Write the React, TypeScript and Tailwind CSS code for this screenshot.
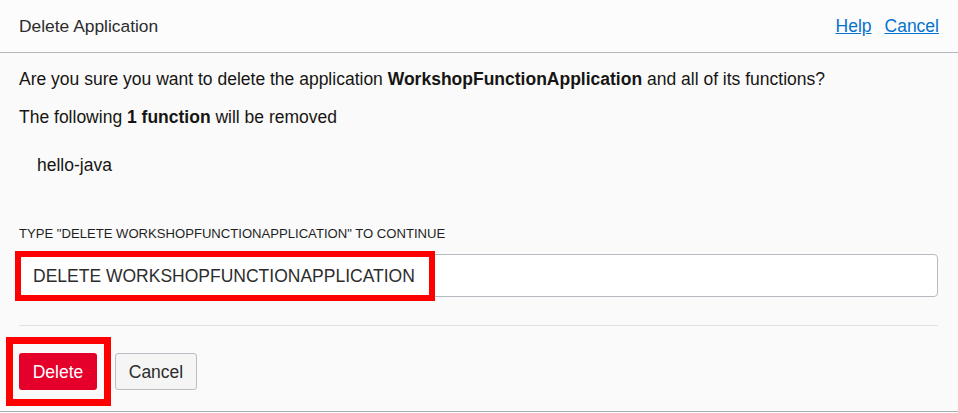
export default function App() {
  return (
    <div
      className="w-[958px] h-[413px] bg-[#fafafa] text-[#161513] overflow-hidden"
      style={{ fontFamily: '"Liberation Sans", Arial, sans-serif' }}
    >
      <div className="h-[412px] border-b border-[#a9aeb5] flex flex-col">
        {/* header */}
        <div className="h-[53px] shrink-0 bg-[#fcfcfd] border-b border-[#b3b8bf] flex items-center justify-between pl-[19px] pr-[19px]">
          <div className="text-[17.4px] text-[#2c2c2c] leading-[20px]">Delete Application</div>
          <div className="flex gap-[13px] text-[17.5px] leading-[20px]">
            <a className="text-[#0572ce] underline cursor-pointer">Help</a>
            <a className="text-[#0572ce] underline cursor-pointer">Cancel</a>
          </div>
        </div>

        {/* body */}
        <div className="pl-[19px] pr-[20px] pt-[16px] text-[17.5px] leading-[20px]">
          <p>
            Are you sure you want to delete the application <b>WorkshopFunctionApplication</b> and all of its
            functions?
          </p>
          <p className="mt-[18px]">
            The following <b>1 function</b> will be removed
          </p>
          <p className="mt-[28px] pl-[18px]">hello-java</p>

          <div className="mt-[51px] text-[13.1px] leading-[15px] text-[#1f1f1f]">
            TYPE "DELETE WORKSHOPFUNCTIONAPPLICATION" TO CONTINUE
          </div>
          <div className="relative mt-[13px] -ml-[3px]">
            <div className="h-[43px] bg-white border border-[#b6bbc2] rounded-[4px] flex items-center pl-[16px] text-[#2d2d2d]">
              DELETE WORKSHOPFUNCTIONAPPLICATION
            </div>
            <div className="absolute left-[-1px] top-[-3px] w-[420px] h-[50px] border-[6px] border-[#ff0000]" />
          </div>

          <div className="mt-[28px] border-t border-[#e2e2e2]" />

          <div className="mt-[27px] flex gap-[18px]">
            <div className="relative">
              <button className="h-[37px] w-[78px] bg-[#e4002b] text-white rounded-[3px] text-[17.5px]">Delete</button>
              <div className="absolute left-[-13px] top-[-16px] w-[105px] h-[69px] border-[7px] border-[#ff0000]" />
            </div>
            <button className="h-[37px] w-[82px] bg-[#f5f5f5] border border-[#b9bec5] rounded-[3px] text-[17.5px] text-[#2c2c2c]">
              Cancel
            </button>
          </div>
        </div>
      </div>
    </div>
  )
}
